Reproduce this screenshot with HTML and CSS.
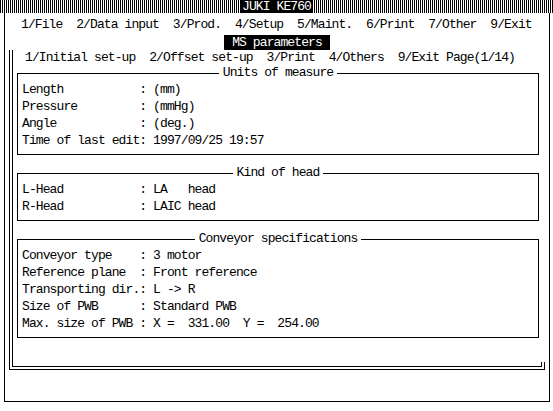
FILE: index.html
```html
<!DOCTYPE html>
<html lang="en">
<head>
  <meta charset="UTF-8" />
  <meta name="viewport" content="width=device-width, initial-scale=1.0"/>
  <title>JUKI KE760 - MS parameters</title>
  <link rel="stylesheet" href="styles.css">
</head>
<body>
  <div class="titlebar"><span class="title">JUKI KE760</span></div>

  <div class="screen">
    <div class="menu">1/File  2/Data input  3/Prod.  4/Setup  5/Maint.  6/Print  7/Other  9/Exit</div>
    <div class="mode"><span class="mode-label">MS parameters</span></div>

    <div class="panel">
      <div class="tabs">1/Initial set-up  2/Offset set-up  3/Print  4/Others  9/Exit Page(1/14)</div>

      <fieldset class="group">
        <legend>Units of measure</legend>
        <div class="row">Length           : (mm)</div>
        <div class="row">Pressure         : (mmHg)</div>
        <div class="row">Angle            : (deg.)</div>
        <div class="row">Time of last edit: 1997/09/25 19:57</div>
      </fieldset>

      <fieldset class="group">
        <legend>Kind of head</legend>
        <div class="row">L-Head           : LA   head</div>
        <div class="row">R-Head           : LAIC head</div>
      </fieldset>

      <fieldset class="group">
        <legend>Conveyor specifications</legend>
        <div class="row">Conveyor type    : 3 motor</div>
        <div class="row">Reference plane  : Front reference</div>
        <div class="row">Transporting dir.: L -&gt; R</div>
        <div class="row">Size of PWB      : Standard PWB</div>
        <div class="row">Max. size of PWB : X =  331.00  Y =  254.00</div>
      </fieldset>
    </div>
  </div>
</body>
</html>
```

FILE: styles.css
```css
body {
  margin: 0;
  width: 553px;
  height: 411px;
  overflow: hidden;
  background: #fff;
  color: #000;
  font-family: "Liberation Mono", "DejaVu Sans Mono", monospace;
  font-size: 13px;
  letter-spacing: -0.9px;
}
.titlebar {
  height: 13px;
  display: flex;
  justify-content: center;
  background: repeating-linear-gradient(90deg, #000 0 1px, #fff 1px 2px);
}
.title {
  background: #000;
  color: #fff;
  padding: 0 2px;
  line-height: 13px;
  white-space: pre;
}
.screen {
  box-sizing: border-box;
  width: 546px;
  height: 389px;
  margin-left: 4px;
  padding-top: 3px;
  border: 1px solid #000;
  border-top: none;
}
.menu {
  line-height: 17px;
  padding-left: 16px;
  white-space: pre;
}
.mode {
  display: flex;
  justify-content: center;
  margin-top: 2px;
}
.mode-label {
  background: #000;
  color: #fff;
  line-height: 15px;
  padding: 0 8px;
  white-space: pre;
}
.panel {
  position: relative;
  box-sizing: border-box;
  height: 320px;
  margin: 0 4px;
  border-left: 4px double #000;
  border-right: 4px double #000;
  border-bottom: 4px double #000;
}
/* only the foot of the right edge is drawn on the machine screen */
.panel::after {
  content: "";
  position: absolute;
  top: 0;
  right: -4px;
  bottom: 4px;
  width: 4px;
  background: #fff;
}
.tabs {
  line-height: 15px;
  padding-left: 12px;
  white-space: pre;
}
.group {
  margin: 0 2px 0 4px;
  padding: 0 4px 5px;
  border: 1px solid #000;
  min-width: 0;
}
.group + .group {
  margin-top: 10px;
}
.group legend {
  margin: 0 auto;
  padding: 0 4px;
  line-height: 16px;
  white-space: pre;
}
.row {
  line-height: 17px;
  white-space: pre;
}
```
